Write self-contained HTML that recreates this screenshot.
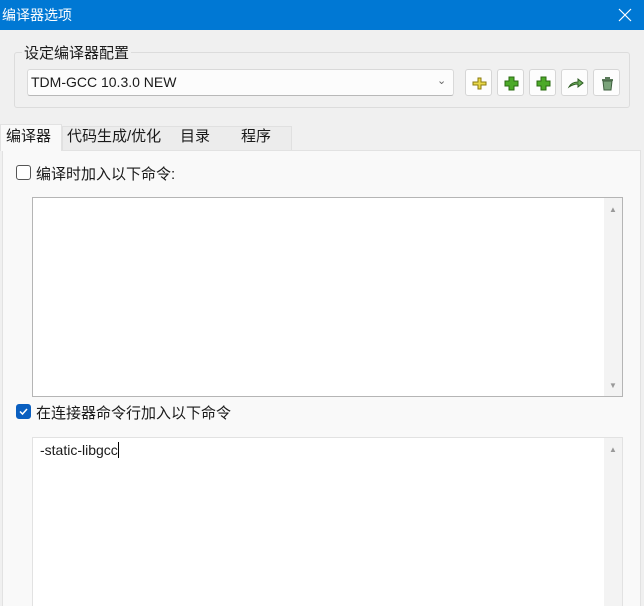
<!DOCTYPE html>
<html style="overflow:hidden;width:644px;height:606px"><head><meta charset="utf-8"><style>
*{box-sizing:border-box;margin:0;padding:0}
body{width:644px;height:606px;overflow:hidden;background:#f0f0f0;font-family:"Liberation Sans","Noto Sans CJK SC",sans-serif;font-size:14px;color:#1a1a1a;position:relative}
.a{position:absolute}
.title{left:0;top:0;width:644px;height:30px;background:#0078d4;color:#fff;font-size:14px;line-height:30px;padding-left:2px}
.x{right:10px;top:0;color:#fff;font-size:20px;line-height:30px}
.grp{left:14px;top:52px;width:616px;height:56px;border:1px solid #dcdcdc;border-radius:3px}
.combo{left:27px;top:69px;width:427px;height:27px;background:#fcfcfc;border:1px solid #d9d9d9;border-bottom-color:#b8b8b8;border-radius:3px;line-height:25px;padding-left:3px;font-size:14px}
.btn{top:69px;width:27px;height:27px;background:#fdfdfd;border:1px solid #d6d6d6;border-radius:3px}
.btn svg{position:absolute;left:5px;top:5px}
.tab{top:125px;height:26px;line-height:24px;font-size:15px;padding-left:4px}
.panel{left:2px;top:150px;width:639px;height:460px;background:#f9f9f9;border:1px solid #e2e2e2}
.memo{left:32px;width:591px;background:#fff;border:1px solid #b5b5b5}
.sb{right:0;top:0;width:18px;bottom:0;background:#f3f3f3}
.cb{width:15px;height:15px;border:1px solid #555;border-radius:3px;background:#fff}
</style></head><body>
<div class="a title">编译器选项</div>
<div class="a" style="right:12px;top:8px"><svg width="14" height="14"><path d="M1 1L13 13M13 1L1 13" stroke="#fff" stroke-width="1.2"/></svg></div>
<div class="a grp"></div>
<div class="a" style="left:22px;top:42px;font-size:15px;background:#f0f0f0;padding:0 2px">设定编译器配置</div>
<div class="a combo">TDM-GCC 10.3.0 NEW</div>
<div class="a" style="left:437px;top:74px;font-size:11px;color:#666">&#8964;</div>
<div class="a btn" style="left:465px"><svg width="17" height="17"><path d="M2 7h5V3h3v4h5v3h-5v4H7v-4H2z" fill="#e8d84a" stroke="#8a7a10" stroke-width="1"/></svg></div>
<div class="a btn" style="left:497px"><svg width="17" height="17"><path d="M6 2h5v4h4v5h-4v4H6v-4H2V6h4z" fill="#4caa28" stroke="#2a6a12"/></svg></div>
<div class="a btn" style="left:529px"><svg width="17" height="17"><path d="M6 2h5v4h4v5h-4v4H6v-4H2V6h4z" fill="#4caa28" stroke="#2a6a12"/></svg></div>
<div class="a btn" style="left:561px"><svg width="17" height="17"><path d="M2 12c2-4 5-5 9-5V4l5 4-5 4V9c-3 0-6 1-9 3z" fill="#6cae5a" stroke="#2d5a22"/></svg></div>
<div class="a btn" style="left:593px"><svg width="17" height="17"><rect x="3" y="4" width="11" height="2" fill="#5a7a5a"/><rect x="6" y="2" width="5" height="2" fill="#5a7a5a"/><path d="M4 6h9l-1 9H5z" fill="#7aa37a" stroke="#3e5e3e"/></svg></div>
<div class="a panel"></div>
<div class="a" style="left:0;top:124px;width:62px;height:27px;background:#f9f9f9;border:1px solid #e2e2e2;border-bottom:none"></div>
<div class="a tab" style="left:2px">编译器</div>
<div class="a" style="left:62px;top:126px;width:230px;height:24px;background:#ececec;border:1px solid #e0e0e0;border-bottom:none"></div>
<div class="a tab" style="left:63px">代码生成/优化</div>
<div class="a tab" style="left:176px">目录</div>
<div class="a tab" style="left:237px">程序</div>
<div class="a cb" style="left:16px;top:165px"></div>
<div class="a" style="left:36px;top:163px;font-size:15px">编译时加入以下命令:</div>
<div class="a memo" style="top:197px;height:200px"><div class="a sb"><div class="a" style="left:5px;top:7px;font-size:8px;color:#999">▲</div><div class="a" style="left:5px;bottom:6px;font-size:8px;color:#999">▼</div></div></div>
<div class="a cb" style="left:16px;top:404px;background:#0a5fc0;border-color:#0a5fc0"><svg width="13" height="13" style="position:absolute;left:0;top:0"><path d="M3 6.5l2.5 2.5 4.5-5" fill="none" stroke="#fff" stroke-width="1.5"/></svg></div>
<div class="a" style="left:36px;top:402px;font-size:15px">在连接器命令行加入以下命令</div>
<div class="a memo" style="top:437px;height:169px;border-color:#e2e2e2;border-bottom:none"><div class="a sb"><div class="a" style="left:5px;top:7px;font-size:8px;color:#999">▲</div></div>
<div class="a" style="left:7px;top:4px;font-size:14px">-static-libgcc<span style="border-left:1px solid #000"> </span></div></div>
</body></html>
